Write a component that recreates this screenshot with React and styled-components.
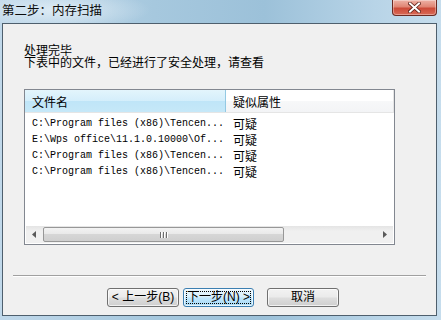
import React from 'react';
import styled, { createGlobalStyle } from 'styled-components';

const rows = [
  'C:\\Program files (x86)\\Tencen...',
  'E:\\Wps office\\11.1.0.10000\\Of...',
  'C:\\Program files (x86)\\Tencen...',
  'C:\\Program files (x86)\\Tencen...',
];

const GlobalStyle = createGlobalStyle`
  html, body {
    margin: 0;
    padding: 0;
    background: #b9d3e6;
  }
  * {
    box-sizing: border-box;
  }
`;

const Window = styled.div`
  width: 441px;
  height: 320px;
  display: flex;
  flex-direction: column;
  background: linear-gradient(90deg, #c0d8ea 0%, #a6c8de 35%, #9cc1d9 60%, #b8d4e7 85%, #c6dded 100%);
  font-family: "Noto Sans CJK SC", "Liberation Sans", sans-serif;
  font-size: 12px;
  color: #000;
  overflow: hidden;
`;

const TitleBar = styled.div`
  height: 23px;
  flex: none;
  display: flex;
  justify-content: space-between;
  align-items: flex-start;
  padding-left: 2px;
  background: radial-gradient(ellipse 90px 20px at 60px 10px, rgba(235, 244, 250, 0.75), rgba(235, 244, 250, 0) 100%);
`;

const Title = styled.span`
  padding-top: 3px;
  line-height: 14px;
  font-size: 12.5px;
  color: #0c0c0c;
`;

const CloseButton = styled.div`
  width: 45px;
  height: 16px;
  margin-right: 4px;
  border: 1px solid #6b2a22;
  border-top: none;
  border-radius: 0 0 4px 4px;
  background: linear-gradient(180deg, #eeb2a6 0%, #e08574 45%, #cc4a38 55%, #d96a57 100%);
  display: flex;
  align-items: center;
  justify-content: center;
  box-shadow: inset 0 0 0 1px rgba(255, 255, 255, 0.35);
`;

const Client = styled.div`
  flex: 1;
  margin: 0 4px 4px 2px;
  border: 1px solid #4e5f6d;
  background: #f0f0f0;
  display: flex;
  flex-direction: column;
`;

const Body = styled.div`
  padding: 20px 0 0 21px;
`;

const Message = styled.div`
  font-size: 12px;
  line-height: 12px;
  height: 12px;
`;

const ListBox = styled.div`
  margin-top: 21px;
  width: 371px;
  height: 156px;
  border: 1px solid #828790;
  background: #fff;
  display: flex;
  flex-direction: column;
`;

const HeaderRow = styled.div`
  display: flex;
  height: 23px;
  border-bottom: 1px solid #e5e5e5;
`;

const HeaderCell = styled.div`
  width: ${(p) => p.$w}px;
  flex: none;
  display: flex;
  align-items: center;
  padding-left: 7px;
  padding-top: 1px;
  border-right: 1px solid ${(p) => (p.$hot ? '#93c9e3' : '#e5e5e5')};
  background: ${(p) =>
    p.$hot
      ? 'linear-gradient(180deg, #e3f5fc 0%, #d4eefb 50%, #bfe5f8 50%, #c6e8f8 100%)'
      : 'linear-gradient(180deg, #ffffff 0%, #ffffff 50%, #f7f8f9 50%, #f3f4f6 100%)'};
`;

const Rows = styled.div`
  flex: 1;
  padding-top: 2px;
`;

const Row = styled.div`
  display: flex;
  height: 16px;
  align-items: center;
`;

const PathCell = styled.div`
  width: 201px;
  flex: none;
  padding-left: 7px;
  font-family: "Liberation Mono", "DejaVu Sans Mono", monospace;
  font-size: 10px;
  white-space: nowrap;
  overflow: hidden;
`;

const AttrCell = styled.div`
  padding-left: 7px;
  font-size: 12px;
`;

const HScroll = styled.div`
  height: 17px;
  margin: 0 1px 1px 1px;
  display: flex;
  align-items: center;
  background: linear-gradient(180deg, #e4e4e4 0%, #f0f0f0 30%, #f0f0f0 100%);
`;

const Arrow = styled.div`
  width: 17px;
  height: 17px;
  flex: none;
  display: flex;
  align-items: center;
  justify-content: center;
`;

const Track = styled.div`
  flex: 1;
  height: 17px;
  display: flex;
  align-items: center;
`;

const Thumb = styled.div`
  width: 241px;
  height: 15px;
  border: 1px solid #979797;
  border-radius: 2px;
  background: linear-gradient(180deg, #f3f3f3 0%, #e8e8e8 50%, #d6d6d6 50%, #cfcfcf 100%);
  display: flex;
  align-items: center;
  justify-content: center;
  gap: 2px;
`;

const Grip = styled.span`
  width: 1px;
  height: 6px;
  background: #6e6e6e;
  box-shadow: 1px 0 0 #fff;
`;

const Separator = styled.div`
  margin: 30px 10px 0 10px;
  height: 2px;
  border-top: 1px solid #a0a0a0;
  border-bottom: 1px solid #ffffff;
`;

const ButtonRow = styled.div`
  display: flex;
  padding: 11px 0 0 104px;
`;

const Button = styled.div`
  width: ${(p) => p.$w || 72}px;
  height: 19px;
  margin-right: ${(p) => p.$gap || 0}px;
  border: 1px solid ${(p) => (p.$def ? '#3c7fb1' : '#707070')};
  border-radius: 3px;
  background: ${(p) =>
    p.$def
      ? 'linear-gradient(180deg, #eaf6fd 0%, #d9f0fc 45%, #bee6fd 55%, #a7d9f5 100%)'
      : 'linear-gradient(180deg, #f2f2f2 0%, #ebebeb 45%, #dddddd 55%, #cfcfcf 100%)'};
  box-shadow: inset 0 0 0 1px rgba(255, 255, 255, 0.7);
  display: flex;
  align-items: center;
  justify-content: center;
  padding: 2px;
  line-height: 13px;
  font-family: "Liberation Sans", "Noto Sans CJK SC", sans-serif;
  font-size: 12px;
  white-space: nowrap;
`;

const Focus = styled.span`
  flex: 1;
  align-self: stretch;
  display: flex;
  align-items: center;
  justify-content: center;
  border: 1px dotted #000;
`;

const Tri = ({ dir }) => (
  <svg width="5" height="7" viewBox="0 0 5 7">
    {dir === 'left' ? <path d="M4 0 L0 3.5 L4 7 Z" fill="#5a5a5a" /> : <path d="M1 0 L5 3.5 L1 7 Z" fill="#5a5a5a" />}
  </svg>
);

export default function App() {
  return (
    <>
      <GlobalStyle />
      <Window>
        <TitleBar>
          <Title>第二步：内存扫描</Title>
          <CloseButton>
            <svg width="13" height="11" viewBox="0 0 13 11">
              <path d="M2 1.5 L11 9.5 M11 1.5 L2 9.5" stroke="#5a1d15" strokeWidth="3.6" strokeLinecap="square" />
              <path d="M2 1.5 L11 9.5 M11 1.5 L2 9.5" stroke="#ffffff" strokeWidth="2" strokeLinecap="square" />
            </svg>
          </CloseButton>
        </TitleBar>
        <Client>
          <Body>
            <Message>处理完毕</Message>
            <Message>下表中的文件，已经进行了安全处理，请查看</Message>
            <ListBox>
              <HeaderRow>
                <HeaderCell $w={201} $hot>文件名</HeaderCell>
                <HeaderCell $w={168}>疑似属性</HeaderCell>
              </HeaderRow>
              <Rows>
                {rows.map((r, i) => (
                  <Row key={i}>
                    <PathCell>{r}</PathCell>
                    <AttrCell>可疑</AttrCell>
                  </Row>
                ))}
              </Rows>
              <HScroll>
                <Arrow><Tri dir="left" /></Arrow>
                <Track>
                  <Thumb>
                    <Grip />
                    <Grip />
                    <Grip />
                  </Thumb>
                </Track>
                <Arrow><Tri dir="right" /></Arrow>
              </HScroll>
            </ListBox>
          </Body>
          <Separator />
          <ButtonRow>
            <Button $gap={4}>&lt; 上一步(B)</Button>
            <Button $gap={13} $w={71} $def>
              <Focus>下一步(N) &gt;</Focus>
            </Button>
            <Button>取消</Button>
          </ButtonRow>
        </Client>
      </Window>
    </>
  );
}
